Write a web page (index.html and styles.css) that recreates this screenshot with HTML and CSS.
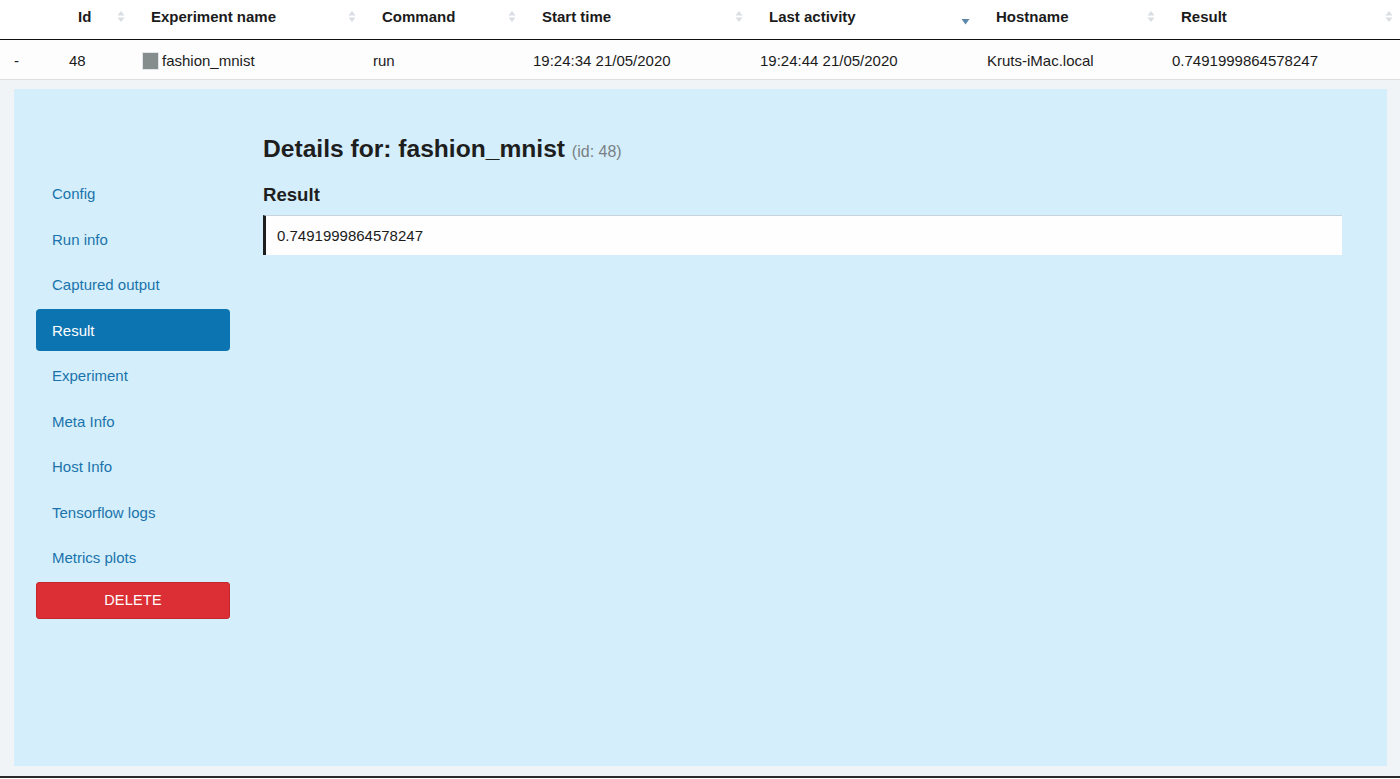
FILE: index.html
```html
<!DOCTYPE html>
<html>
<head>
<meta charset="utf-8">
<link rel="stylesheet" href="styles.css">
</head>
<body>
<table class="runs">
  <colgroup>
    <col style="width:59px"><col style="width:73px"><col style="width:231px"><col style="width:160px"><col style="width:227px"><col style="width:227px"><col style="width:185px"><col style="width:238px">
  </colgroup>
  <thead>
    <tr>
      <th class="blank"></th>
      <th><div class="th-inner"><span>Id</span><svg class="sort" width="8" height="13" viewBox="0 0 8 13"><path d="M0.5 5.5 L4 1 L7.5 5.5 Z M0.5 7.5 L7.5 7.5 L4 12 Z"/></svg></div></th>
      <th><div class="th-inner"><span>Experiment name</span><svg class="sort" width="8" height="13" viewBox="0 0 8 13"><path d="M0.5 5.5 L4 1 L7.5 5.5 Z M0.5 7.5 L7.5 7.5 L4 12 Z"/></svg></div></th>
      <th><div class="th-inner"><span>Command</span><svg class="sort" width="8" height="13" viewBox="0 0 8 13"><path d="M0.5 5.5 L4 1 L7.5 5.5 Z M0.5 7.5 L7.5 7.5 L4 12 Z"/></svg></div></th>
      <th><div class="th-inner"><span>Start time</span><svg class="sort" width="8" height="13" viewBox="0 0 8 13"><path d="M0.5 5.5 L4 1 L7.5 5.5 Z M0.5 7.5 L7.5 7.5 L4 12 Z"/></svg></div></th>
      <th><div class="th-inner"><span>Last activity</span><svg class="sort sorted" width="9" height="13" viewBox="0 0 9 13"><path d="M0.5 6 L8.5 6 L4.5 11.5 Z"/></svg></div></th>
      <th><div class="th-inner"><span>Hostname</span><svg class="sort" width="8" height="13" viewBox="0 0 8 13"><path d="M0.5 5.5 L4 1 L7.5 5.5 Z M0.5 7.5 L7.5 7.5 L4 12 Z"/></svg></div></th>
      <th><div class="th-inner"><span>Result</span><svg class="sort" width="8" height="13" viewBox="0 0 8 13"><path d="M0.5 5.5 L4 1 L7.5 5.5 Z M0.5 7.5 L7.5 7.5 L4 12 Z"/></svg></div></th>
    </tr>
  </thead>
  <tbody>
    <tr class="data-row">
      <td class="toggle">-</td>
      <td>48</td>
      <td><span class="name"><span class="swatch"></span>fashion_mnist</span></td>
      <td>run</td>
      <td>19:24:34 21/05/2020</td>
      <td>19:24:44 21/05/2020</td>
      <td>Kruts-iMac.local</td>
      <td>0.7491999864578247</td>
    </tr>
    <tr class="detail-row">
      <td colspan="8" class="detail-cell">
        <div class="panel">
          <nav class="side">
            <a class="nav-link">Config</a>
            <a class="nav-link">Run info</a>
            <a class="nav-link">Captured output</a>
            <a class="nav-link active">Result</a>
            <a class="nav-link">Experiment</a>
            <a class="nav-link">Meta Info</a>
            <a class="nav-link">Host Info</a>
            <a class="nav-link">Tensorflow logs</a>
            <a class="nav-link">Metrics plots</a>
            <button class="delete">DELETE</button>
          </nav>
          <section class="content">
            <h1 class="title">Details for: fashion_mnist <small>(id: 48)</small></h1>
            <h2 class="sub">Result</h2>
            <div class="result-box">0.7491999864578247</div>
          </section>
        </div>
      </td>
    </tr>
  </tbody>
</table>
</body>
</html>
```

FILE: styles.css
```css
html, body {
  margin: 0;
  padding: 0;
  background: #ffffff;
  font-family: "Liberation Sans", Arial, Helvetica, sans-serif;
  color: #1b1b1b;
}

.runs {
  width: 1400px;
  border-collapse: collapse;
  table-layout: fixed;
}

.runs th {
  height: 39px;
  padding: 0 7px 0 19px;
  font-size: 15px;
  font-weight: bold;
  text-align: left;
  vertical-align: top;
  border-bottom: 1px solid #111;
  box-sizing: border-box;
}

.th-inner {
  display: flex;
  align-items: center;
  justify-content: space-between;
  height: 32px;
}

.sort {
  fill: #d9dee3;
  flex: none;
  margin-top: 1px;
}

.sort.sorted {
  fill: #5f87a8;
  margin-top: 6px;
}

.data-row td {
  height: 40px;
  padding: 2px 10px 0;
  font-size: 15px;
  color: #1b1b1b;
  border-bottom: 1px solid #dcdfe2;
  background: #fdfdfd;
  white-space: nowrap;
  box-sizing: border-box;
  vertical-align: middle;
}

.data-row td.toggle {
  padding-left: 14px;
}

.name {
  display: inline-flex;
  align-items: center;
  vertical-align: middle;
}

.swatch {
  display: inline-block;
  width: 15px;
  height: 16px;
  background: #858e8d;
  border: 1px solid #e3e6e8;
  margin-right: 3px;
}

.detail-cell {
  padding: 9px 13px 10px 14px;
  background: #f1f4f6;
  border-bottom: 2px solid #2a2a2a;
}

.panel {
  display: flex;
  height: 677px;
  box-sizing: border-box;
  background: #d4effb;
  padding: 45px 45px 0 22px;
}

.side {
  width: 194px;
  flex: none;
  display: flex;
  flex-direction: column;
  gap: 3.5px;
  margin-top: 39px;
}

.nav-link {
  display: flex;
  align-items: center;
  height: 42px;
  padding: 0 16px;
  font-size: 15px;
  color: #1a73ac;
  border-radius: 4px;
  box-sizing: border-box;
}

.nav-link.active {
  background: #0d74b2;
  color: #ffffff;
}

.delete {
  margin-top: -0.5px;
  height: 37px;
  width: 194px;
  background: #db2f35;
  color: #ffffff;
  border: 1px solid #c4262c;
  border-radius: 3px;
  font-family: "Liberation Sans", Arial, sans-serif;
  font-size: 14.5px;
  letter-spacing: 0.2px;
}

.content {
  flex: 1;
  margin-left: 33px;
}

.title {
  margin: 0;
  font-size: 24.6px;
  line-height: 30px;
  font-weight: bold;
  color: #1e1e1e;
}

.title small {
  font-size: 16px;
  font-weight: normal;
  color: #7a7f83;
}

.sub {
  margin: 17px 0 9px;
  font-size: 18.6px;
  line-height: 22px;
  font-weight: bold;
  color: #1e1e1e;
}

.result-box {
  display: flex;
  align-items: center;
  height: 40px;
  box-sizing: border-box;
  background: #fefefe;
  border-left: 3px solid #1e1e1e;
  border-top: 1px solid #c6d3dc;
  padding-left: 11px;
  font-size: 15px;
  color: #1b1b1b;
}
```
